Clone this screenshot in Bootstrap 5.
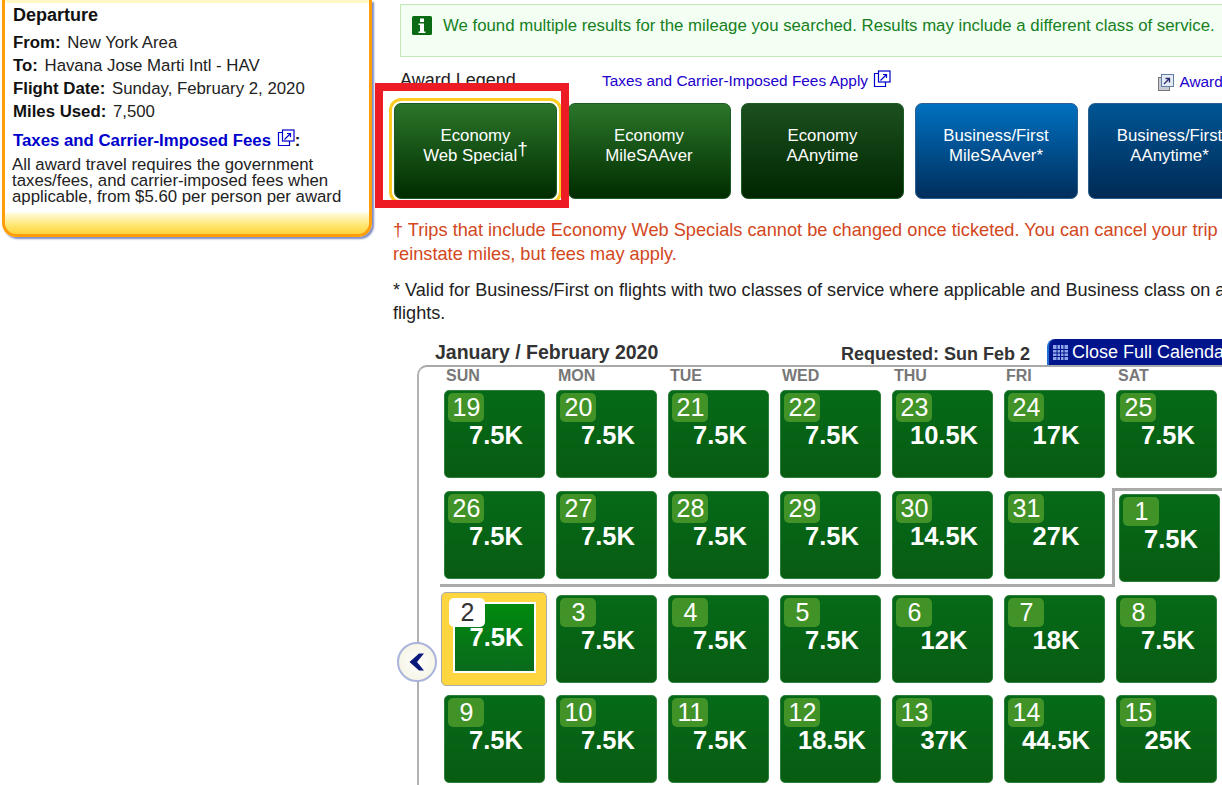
<!DOCTYPE html>
<html lang="en">

<head>
    <meta charset="UTF-8">
    <meta name="viewport" content="width=device-width, initial-scale=1.0">
    <title>Award Calendar</title>
    <link href="https://cdn.jsdelivr.net/npm/bootstrap@5.3.3/dist/css/bootstrap.min.css" rel="stylesheet">
    <style>
        html, body { height: 785px; overflow: hidden; }
        body { font-family: "Liberation Sans", Arial, sans-serif; font-size: 16.8px; color: #222; background: #fff; }
        a { text-decoration: none; color: #2200cc; }

        #sidebar { width: 375px; flex-shrink: 0; }
        .trip-box { width: 370px; margin-left: 2px; height: 237px; border: 3px solid #ff9d0a; border-top: 0; border-radius: 0 0 14px 14px; box-shadow: 2px 2px 2px #7c8cc4; background: linear-gradient(#fff 0, #fff 212px, #fffbdc 213px, #ffe56a 226px, #ffcc2e 237px); }
        .trip-top { height: 3px; background: #fff8c4; }
        .trip-body { padding: 2px 8px 0 8px; }
        .trip-title { font-size: 18px; font-weight: 700; line-height: 20px; color: #111; margin-bottom: 6px; }
        .trip-line { line-height: 23px; white-space: nowrap; }
        .trip-line b { margin-right: 2px; color: #111; }
        .trip-fees { font-weight: 700; line-height: 22px; margin-top: 6px; color: #111; white-space: nowrap; }
        .trip-fees a { color: #0000cc; }
        .trip-fees svg { vertical-align: -1px; margin-left: 1px; }
        .trip-note { line-height: 16px; margin-top: 5px; margin-left: -1px; white-space: nowrap; }

        #main { width: 847px; flex-shrink: 0; height: 785px; overflow: hidden; }
        .result-alert { margin: 4px 0 0 25px; width: 900px; height: 53px; background: #f2fff2; border: 1px solid #c3e8b6; border-radius: 0; padding: 11px; color: #16801e; white-space: nowrap; line-height: 20px; }
        .info-icon { margin-right: 11px; }
        .legend-row { margin: 13px 0 0 25px; height: 33px; white-space: nowrap; font-size: 15.4px; }
        .legend-title { width: 202px; flex-shrink: 0; font-size: 18px; line-height: 20px; color: #222; }
        .legend-link { width: 556px; flex-shrink: 0; line-height: 20px; }
        .legend-link svg { vertical-align: -2px; margin-left: 1px; }
        .legend-rules { line-height: 20px; flex-shrink: 0; margin-top: 2px; }
        .legend-rules svg { vertical-align: -4px; margin-right: 2px; }

        .fare-row { margin-left: 19px; gap: 10.5px; position: relative; width: 900px; }
        .fare-btn { width: 163px; height: 96px; flex-shrink: 0; border-radius: 7px; padding: 22px 0 0; color: #fff; line-height: 20px; text-align: center; border: 1px solid #1d5b25; }
        .fare-btn sup { font-size: 19px; top: -6px; line-height: 0; }
        .fare-web { background: linear-gradient(#2b762a, #002c00); box-shadow: 0 0 0 2px #fff, 0 0 0 5px #ffcc22; }
        .fare-saver { background: linear-gradient(#2b762a, #002c00); }
        .fare-any { background: linear-gradient(#1c5020, #002600); }
        .fare-biz { background: linear-gradient(#0070c0, #002e5c); border-color: #2a5f8f; }
        .fare-first { background: linear-gradient(#005594, #002a55); border-color: #2a5f8f; }
        .red-frame { position: absolute; left: -19px; top: -20px; width: 194px; height: 125px; border: 8px solid #ed1c24; z-index: 2; }

        .fare-note { margin: 19px 0 0 18px; font-size: 18.2px; line-height: 24px; color: #d2471c; white-space: nowrap; }
        .class-note { margin: 13px 0 0 18px; font-size: 18.1px; line-height: 23px; color: #222; white-space: nowrap; }

        .cal-head { margin: 14px 0 0 60px; height: 26px; white-space: nowrap; width: 900px; }
        .cal-title { width: 406px; font-size: 19.5px; font-weight: 700; line-height: 24px; padding-bottom: 1px; color: #333; flex-shrink: 0; }
        .cal-requested { width: 206px; font-weight: 700; font-size: 18px; line-height: 22px; color: #333; flex-shrink: 0; }
        .cal-close { background: #00148c; color: #fff; font-size: 18px; line-height: 24px; height: 26px; padding: 1px 0 0 4px; border-left: 2px solid #1f6fd0; border-radius: 8px 0 0 0; width: 200px; flex-shrink: 0; }
        .cal-close svg { vertical-align: -2px; margin-right: 4px; }

        .cal-box { margin-left: 42px; width: 900px; height: 440px; position: relative; border-left: 2px solid #b2b2b2; border-top: 2px solid #a8a8a8; border-top-left-radius: 10px; padding-left: 21px; font-size: 16px; }
        .day-names { height: 23px; padding-left: 6px; }
        .day-names span { width: 112px; flex-shrink: 0; font-weight: 700; color: #777; line-height: 17px; }
        .week { gap: 11px; padding-left: 4px; align-items: flex-start; }
        .week-split { margin-top: 10px; }
        .month-end { width: 675px; flex-shrink: 0; padding: 3px 7px 5px 4px; gap: 11px; border-right: 3px solid #aaa; border-bottom: 3px solid #aaa; }
        .month-start { border-top: 3px solid #aaa; padding: 3px 0 0 4px; width: 200px; }
        .week-third { margin-top: 8px; }
        .week-fourth { margin-top: 12px; }

        .day-cell { width: 101px; height: 88px; flex-shrink: 0; background: linear-gradient(#056a18, #085c12); border: 1px solid #2f7f3a; border-radius: 5px; padding: 2px 3px; color: #fff; text-align: center; }
        .day-num { width: 36px; height: 29px; background: #419327; border-radius: 5px; font-size: 25px; line-height: 29px; padding-left: 1px; }
        .day-miles { font-size: 25.5px; font-weight: 700; line-height: 26px; padding-left: 3px; }
        .day-picked { width: 106px; height: 94px; margin: -3px -2px -3px -3px; background: #ffd540; border: 1px solid #aaa; padding: 9px 10px 12px 11px; position: relative; }
        .day-picked .day-inner { height: 71px; border: 2px solid #fff; background: linear-gradient(#008a0e, #0a6a1c); padding-top: 20px; }
        .day-picked .day-miles { padding-left: 4px; }
        .day-picked .day-num { position: absolute; left: 7px; top: 5px; background: #fff; color: #333; }

        .prev-btn { position: absolute; left: -22px; top: 275px; width: 40px; height: 40px; border-radius: 50%; border: 2px solid #aab4dc; background: radial-gradient(#fff, #f2f1dc); padding: 0; display: flex; align-items: center; justify-content: center; }
    </style>
</head>

<body>
    <div class="d-flex">
        <div id="sidebar">
            <div class="trip-box">
                <div class="trip-top"></div>
                <div class="trip-body">
                    <div class="trip-title">Departure</div>
                    <div class="trip-line"><b>From:</b> New York Area</div>
                    <div class="trip-line"><b>To:</b> Havana Jose Marti Intl - HAV</div>
                    <div class="trip-line"><b>Flight Date:</b> Sunday, February 2, 2020</div>
                    <div class="trip-line"><b>Miles Used:</b> 7,500</div>
                    <div class="trip-fees"><a href="#">Taxes and Carrier-Imposed Fees
                        <svg width="18" height="18" viewBox="0 0 18 18" fill="none" stroke="#0000cc" stroke-width="1.2"><path d="M6 3.5H1.5v13h11V12"/><rect x="5.5" y="1" width="11.5" height="11"/><path d="M7.5 10.5l6-6M10 4.5h3.5V8"/></svg></a>:</div>
                    <div class="trip-note">All award travel requires the government<br>taxes/fees, and carrier-imposed fees when<br>applicable, from $5.60 per person per award</div>
                </div>
            </div>
        </div>

        <div id="main">
            <div class="alert result-alert d-flex align-items-start">
                <svg class="info-icon flex-shrink-0" width="20" height="19" viewBox="0 0 20 19"><rect width="20" height="19" rx="1.5" fill="#0a6b14"/><rect x="8" y="2.5" width="4" height="3.5" fill="#fff"/><path d="M6.5 7.500H12v8h1.500v1.500h-7v-1.500H8v-6.500H6.500z" fill="#fff"/></svg>
                <span>We found multiple results for the mileage you searched. Results may include a different class of service.</span>
            </div>

            <div class="legend-row d-flex">
                <div class="legend-title">Award Legend</div>
                <a class="legend-link" href="#">Taxes and Carrier-Imposed Fees Apply
                    <svg width="18" height="18" viewBox="0 0 18 18" fill="none" stroke="#0000cc" stroke-width="1.2"><path d="M6 3.500H1.500v13h11V12"/><rect x="5.500" y="1" width="11.500" height="11"/><path d="M7.500 10.500l6-6M10 4.500h3.500V8"/></svg></a>
                <a class="legend-rules" href="#"><svg width="16" height="17" viewBox="0 0 16 17"><rect x="0.500" y="3.500" width="11" height="13" fill="#c9ccd6" stroke="#777"/><rect x="3.500" y="0.500" width="12" height="12" fill="#e6ecf6" stroke="#5f7da6"/><path d="M6 10l5-5M7.500 4.500h4v4" fill="none" stroke="#2e2a6e" stroke-width="1.300"/></svg>
                    Award Rules</a>
            </div>

            <div class="fare-row d-flex">
                <div class="red-frame"></div>
                <div class="fare-btn fare-web">Economy<br>Web Special<sup>†</sup></div>
                <div class="fare-btn fare-saver">Economy<br>MileSAAver</div>
                <div class="fare-btn fare-any">Economy<br>AAnytime</div>
                <div class="fare-btn fare-biz">Business/First<br>MileSAAver*</div>
                <div class="fare-btn fare-first">Business/First<br>AAnytime*</div>
            </div>

            <div class="fare-note">† Trips that include Economy Web Specials cannot be changed once ticketed. You can cancel your trip to<br>reinstate miles, but fees may apply.</div>
            <div class="class-note">* Valid for Business/First on flights with two classes of service where applicable and Business class on all<br>flights.</div>

            <div class="cal-head d-flex align-items-end">
                <div class="cal-title">January / February 2020</div>
                <div class="cal-requested">Requested: Sun Feb 2</div>
                <div class="cal-close">
                    <svg width="15" height="15" viewBox="0 0 15 15" fill="#8fa4e8" stroke="#00148c" stroke-width="1"><rect x="0" y="0" width="15" height="15" stroke="none"/><path d="M0 4.500h15M0 8h15M0 11.500h15M4 0v15M7.500 0v15M11 0v15" fill="none"/></svg>Close Full Calendar</div>
            </div>

            <div class="cal-box">
                <button class="prev-btn" type="button" aria-label="Previous">
                    <svg width="16" height="18" viewBox="0 0 16 18"><path d="M10 0.500L0.500 9 10 17.500h5L8 9l7-8.500z" fill="#0b1a78"/></svg>
                </button>
                <div class="day-names d-flex">
                    <span>SUN</span><span>MON</span><span>TUE</span><span>WED</span><span>THU</span><span>FRI</span><span>SAT</span>
                </div>

                <div class="week d-flex">
                    <div class="day-cell"><div class="day-num">19</div><div class="day-miles">7.5K</div></div>
                    <div class="day-cell"><div class="day-num">20</div><div class="day-miles">7.5K</div></div>
                    <div class="day-cell"><div class="day-num">21</div><div class="day-miles">7.5K</div></div>
                    <div class="day-cell"><div class="day-num">22</div><div class="day-miles">7.5K</div></div>
                    <div class="day-cell"><div class="day-num">23</div><div class="day-miles">10.5K</div></div>
                    <div class="day-cell"><div class="day-num">24</div><div class="day-miles">17K</div></div>
                    <div class="day-cell"><div class="day-num">25</div><div class="day-miles">7.5K</div></div>
                </div>

                <div class="week-split d-flex">
                    <div class="month-end d-flex">
                        <div class="day-cell"><div class="day-num">26</div><div class="day-miles">7.5K</div></div>
                        <div class="day-cell"><div class="day-num">27</div><div class="day-miles">7.5K</div></div>
                        <div class="day-cell"><div class="day-num">28</div><div class="day-miles">7.5K</div></div>
                        <div class="day-cell"><div class="day-num">29</div><div class="day-miles">7.5K</div></div>
                        <div class="day-cell"><div class="day-num">30</div><div class="day-miles">14.5K</div></div>
                        <div class="day-cell"><div class="day-num">31</div><div class="day-miles">27K</div></div>
                    </div>
                    <div class="month-start">
                        <div class="day-cell"><div class="day-num">1</div><div class="day-miles">7.5K</div></div>
                    </div>
                </div>

                <div class="week week-third d-flex">
                    <div class="day-cell day-picked"><div class="day-num">2</div><div class="day-inner"><div class="day-miles">7.5K</div></div></div>
                    <div class="day-cell"><div class="day-num">3</div><div class="day-miles">7.5K</div></div>
                    <div class="day-cell"><div class="day-num">4</div><div class="day-miles">7.5K</div></div>
                    <div class="day-cell"><div class="day-num">5</div><div class="day-miles">7.5K</div></div>
                    <div class="day-cell"><div class="day-num">6</div><div class="day-miles">12K</div></div>
                    <div class="day-cell"><div class="day-num">7</div><div class="day-miles">18K</div></div>
                    <div class="day-cell"><div class="day-num">8</div><div class="day-miles">7.5K</div></div>
                </div>

                <div class="week week-fourth d-flex">
                    <div class="day-cell"><div class="day-num">9</div><div class="day-miles">7.5K</div></div>
                    <div class="day-cell"><div class="day-num">10</div><div class="day-miles">7.5K</div></div>
                    <div class="day-cell"><div class="day-num">11</div><div class="day-miles">7.5K</div></div>
                    <div class="day-cell"><div class="day-num">12</div><div class="day-miles">18.5K</div></div>
                    <div class="day-cell"><div class="day-num">13</div><div class="day-miles">37K</div></div>
                    <div class="day-cell"><div class="day-num">14</div><div class="day-miles">44.5K</div></div>
                    <div class="day-cell"><div class="day-num">15</div><div class="day-miles">25K</div></div>
                </div>
            </div>
        </div>
    </div>

    <script src="https://cdn.jsdelivr.net/npm/bootstrap@5.3.3/dist/js/bootstrap.bundle.min.js"></script>
</body>

</html>
